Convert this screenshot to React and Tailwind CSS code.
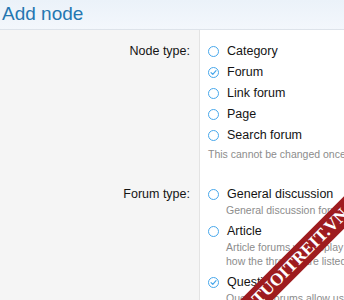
import React from 'react';

const font = { fontFamily: '"Liberation Sans", Arial, sans-serif' };

function Radio({ checked }) {
  return (
    <span className="relative flex items-center justify-center w-[11px] h-[11px] shrink-0 rounded-full border-[1.5px] border-[#47a7eb] bg-white">
      {checked && (
        <svg width="7" height="7" viewBox="0 0 8 8" fill="none">
          <path d="M1.2 4.2 L3.2 6.1 L6.9 1.9" stroke="#47a7eb" strokeWidth="1.4" strokeLinecap="round" strokeLinejoin="round" />
        </svg>
      )}
    </span>
  );
}

function SimpleOption({ label, checked }) {
  return (
    <div className="flex items-center h-[21px] gap-[8px]">
      <Radio checked={checked} />
      <span className="text-[12.5px] text-[#141414]">{label}</span>
    </div>
  );
}

function HintOption({ label, hint, checked }) {
  return (
    <div className="mb-[5px]">
      <div className="flex items-center h-[18px] gap-[8px]">
        <Radio checked={checked} />
        <span className="text-[12.5px] text-[#141414] whitespace-nowrap">{label}</span>
      </div>
      <div className="pl-[18px] text-[10.5px] leading-[14px] text-[#8c8c8c] whitespace-nowrap">{hint}</div>
    </div>
  );
}

export default function App() {
  return (
    <div className="relative w-[344px] h-[300px] overflow-hidden bg-white" style={font}>
      {/* Title bar */}
      <div className="h-[30px] bg-gradient-to-b from-[#ebf2f9] to-[#f3f7fc] border-b border-[#dde3ea] pl-[2px]">
        <h1 className="text-[19px] leading-[28px] text-[#2577b1]">Add node</h1>
      </div>

      {/* Node type */}
      <div className="flex">
        <div className="w-[200px] shrink-0 bg-[#f5f5f5] border-r border-[#e3e3e3] pt-[11px] pr-[9px] text-right text-[12.5px] leading-[21px] text-[#141414]">
          Node type:
        </div>
        <div className="pl-[8px] pt-[11px] pb-[14px]">
          <SimpleOption label="Category" />
          <SimpleOption label="Forum" checked />
          <SimpleOption label="Link forum" />
          <SimpleOption label="Page" />
          <SimpleOption label="Search forum" />
          <div className="mt-[1px] text-[10.5px] leading-[14px] text-[#8c8c8c] whitespace-nowrap">
            This cannot be changed once the node has been created.
          </div>
        </div>
      </div>

      {/* Forum type */}
      <div className="flex">
        <div className="w-[200px] shrink-0 bg-[#f5f5f5] border-r border-[#e3e3e3] pt-[10px] pr-[9px] text-right text-[12.5px] leading-[18px] text-[#141414]">
          Forum type:
        </div>
        <div className="pl-[8px] pt-[10px]">
          <HintOption label="General discussion" hint="General discussion forums display threads in a traditional list." />
          <HintOption
            label="Article"
            hint={<>Article forums will display threads in a blog-like style,<br />how the threads are listed and viewed.</>}
          />
          <HintOption label="Question" checked hint="Question forums allow users to mark answers as the best." />
        </div>
      </div>

      {/* Watermark ribbon */}
      <div className="absolute left-[190px] top-[245px] w-[220px] h-[23px] -rotate-45 bg-[#9e1c1f] flex items-center justify-center">
        <span className="text-white text-[17.5px] font-bold leading-none" style={{ fontFamily: '"Liberation Serif", "Times New Roman", serif' }}>
          TUOITREIT.VN
        </span>
      </div>
    </div>
  );
}
